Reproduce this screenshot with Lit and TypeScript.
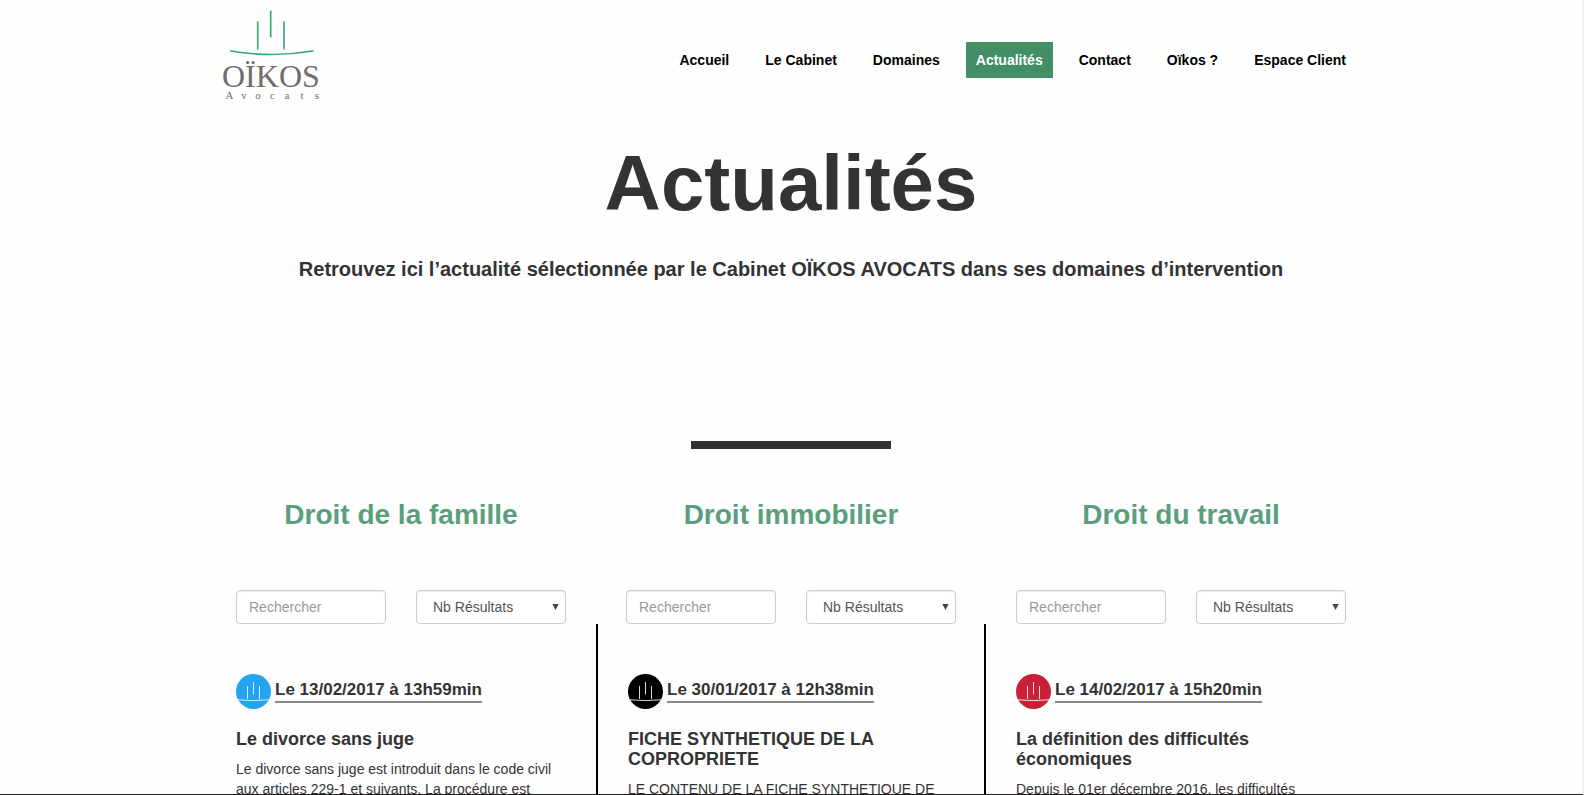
import { LitElement, html, css } from "lit";
import { customElement, property } from "lit/decorators.js";
import { classMap } from "lit/directives/class-map.js";

interface Topic {
  id: string;
  heading: string;
  tone: "blue" | "black" | "red";
  date: string;
  title: string;
  body: string;
}

const NAV = ["Accueil", "Le Cabinet", "Domaines", "Actualités", "Contact", "Oïkos ?", "Espace Client"];

const TOPICS: Topic[] = [
  {
    id: "famille",
    heading: "Droit de la famille",
    tone: "blue",
    date: "Le 13/02/2017 à 13h59min",
    title: "Le divorce sans juge",
    body: "Le divorce sans juge est introduit dans le code civil aux articles 229-1 et suivants. La procédure est",
  },
  {
    id: "immobilier",
    heading: "Droit immobilier",
    tone: "black",
    date: "Le 30/01/2017 à 12h38min",
    title: "FICHE SYNTHETIQUE DE LA COPROPRIETE",
    body: "LE CONTENU DE LA FICHE SYNTHETIQUE DE",
  },
  {
    id: "travail",
    heading: "Droit du travail",
    tone: "red",
    date: "Le 14/02/2017 à 15h20min",
    title: "La définition des difficultés économiques",
    body: "Depuis le 01er décembre 2016, les difficultés",
  },
];

@customElement("oikos-logo")
class OikosLogo extends LitElement {
  static styles = css`
    :host { display: block; }
    .logo { display: block; }
    .lines { fill: none; stroke: #35a86c; stroke-width: 1.6; stroke-linecap: round; }
    .name { font: 32px "Liberation Serif", serif; fill: #726c6c; }
    .sub { font: 11px "Liberation Serif", serif; fill: #726c6c; }
  `;
  render() {
    return html`
      <svg class="logo" width="100" height="102" viewBox="0 0 100 102" role="img" aria-label="Oïkos Avocats">
        <path class="lines" d="M36.7 22V49M49.7 11V37M63 22V49M9.500 51Q50 58 92 51" />
        <text class="name" x="1" y="87">OÏKOS</text>
        <text class="sub" y="99" text-anchor="middle" x="8.500 23 37 51.500 66 81 96">Avocats</text>
      </svg>
    `;
  }
}

@customElement("topic-column")
class TopicColumn extends LitElement {
  @property({ attribute: false }) topic!: Topic;
  @property({ type: Boolean }) ruled = false;

  static styles = css`
    :host { display: flex; flex-direction: column; min-width: 0; }
    * { box-sizing: border-box; }
    .heading { margin: 0; text-align: center; font-size: 28px; line-height: 32px; color: #5a9f7c; }
    .filters { display: grid; grid-template-columns: 1fr 1fr; gap: 30px; margin: 59px 30px 0; }
    .field { position: relative; display: block; }
    .control {
      width: 100%; height: 34px; padding: 6px 12px; border: 1px solid #ccc; border-radius: 4px;
      background: #fff; color: #555; font: 14px/20px "Liberation Sans", Arial, sans-serif;
      box-shadow: inset 0 1px 1px rgba(0, 0, 0, 0.075); appearance: none;
    }
    .control::placeholder { color: #999; opacity: 1; }
    .pick { padding: 6px 16px; }
    .arrow { position: absolute; right: 7px; top: 13px; pointer-events: none; fill: #444; }
    .article { flex: 1; padding: 50px 30px 0; }
    .ruled { border-left: 2px solid #000; border-right: 2px solid #000; }
    .meta { display: flex; gap: 4px; height: 36px; }
    .badge { flex: none; }
    .blue { fill: #22a4ee; }
    .black { fill: #000; }
    .red { fill: #c82038; }
    .mark { fill: none; stroke: #fff; stroke-opacity: 0.85; }
    .date {
      align-self: flex-start; margin-top: 6px; padding-bottom: 1px; border-bottom: 2px solid #888;
      font-size: 17px; line-height: 20px; font-weight: bold; white-space: nowrap;
    }
    .title { margin: 19px 0 10px; font-size: 18px; line-height: 20px; }
    .body { margin: 0; font-size: 14px; line-height: 20px; }
  `;

  render() {
    const t = this.topic;
    return html`
      <h2 class="heading">${t.heading}</h2>
      <form class="filters">
        <label class="field">
          <input class="control" type="text" placeholder="Rechercher" aria-label="Rechercher" />
        </label>
        <label class="field">
          <select class="control pick" aria-label="Nb Résultats">
            <option>Nb Résultats</option>
          </select>
          <svg class="arrow" width="7" height="8" viewBox="0 0 7 8" aria-hidden="true"><path d="M0.300 1H6.700L3.500 7Z" /></svg>
        </label>
      </form>
      <article class=${classMap({ article: true, ruled: this.ruled })}>
        <div class="meta">
          <svg class="badge" width="35" height="35" viewBox="0 0 35 35" aria-hidden="true">
            <circle class=${t.tone} cx="17.500" cy="17.500" r="17.500" />
            <path class="mark" d="M11.500 12V25M17.500 8V20.500M23.500 12V25M1.500 25.800Q17.500 27.400 33.500 25.800" />
          </svg>
          <time class="date">${t.date}</time>
        </div>
        <h3 class="title">${t.title}</h3>
        <p class="body">${t.body}</p>
      </article>
    `;
  }
}

@customElement("app-root")
class AppRoot extends LitElement {
  static styles = css`
    :host {
      display: block; box-sizing: border-box; height: 100vh; overflow: hidden;
      border-right: 2px solid #f1f1f1; border-bottom: 1px solid #231f20;
      background: #fefefe; color: #333; font-family: "Liberation Sans", Arial, sans-serif;
    }
    .container { box-sizing: border-box; max-width: 1170px; margin: 0 auto; }
    .header { display: flex; justify-content: space-between; align-items: flex-start; padding: 0 20px 0 15px; }
    .nav { display: flex; flex-wrap: wrap; gap: 16px; padding-top: 42px; }
    .link { padding: 8px 10px; color: #000; font-size: 14px; line-height: 20px; font-weight: bold; text-decoration: none; }
    .active { background: #428e65; color: #fff; }
    .title { margin: 37px 0 0; text-align: center; font-size: 78px; line-height: 88px; }
    .lead { margin: 30px 0 0; text-align: center; font-size: 20px; line-height: 24px; font-weight: bold; }
    .rule { width: 200px; height: 8px; margin: 160px auto 50px; border: 0; background: #333; }
    .columns { display: grid; grid-template-columns: repeat(3, 1fr); }
  `;

  render() {
    return html`
      <header class="container header">
        <oikos-logo></oikos-logo>
        <nav class="nav">
          ${NAV.map((n) => html`<a href="#" class=${classMap({ link: true, active: n === "Actualités" })}>${n}</a>`)}
        </nav>
      </header>
      <main class="container">
        <h1 class="title">Actualités</h1>
        <p class="lead">Retrouvez ici l’actualité sélectionnée par le Cabinet OÏKOS AVOCATS dans ses domaines d’intervention</p>
        <hr class="rule" />
        <div class="columns">
          ${TOPICS.map((t, i) => html`<topic-column .topic=${t} ?ruled=${i === 1}></topic-column>`)}
        </div>
      </main>
    `;
  }
}
